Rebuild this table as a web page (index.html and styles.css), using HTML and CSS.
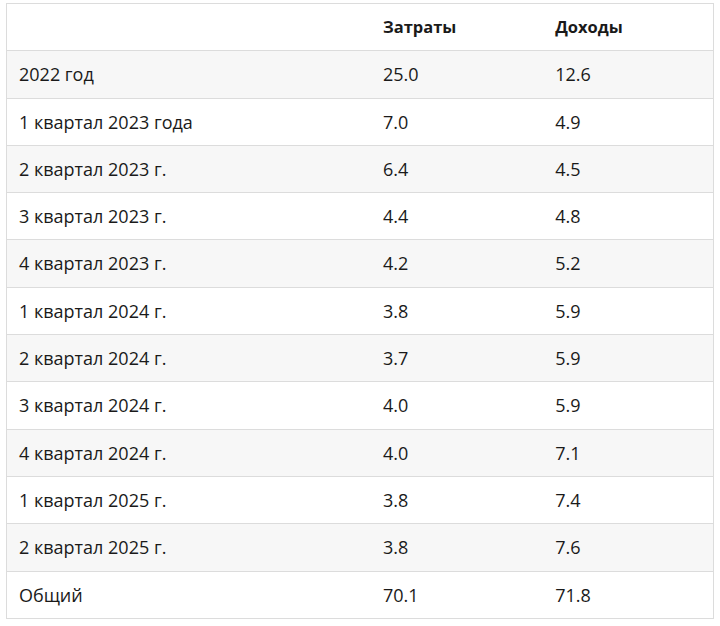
FILE: index.html
```html
<!DOCTYPE html>
<html lang="ru">
<head>
<meta charset="utf-8">
<title>Затраты и доходы</title>
<link rel="stylesheet" href="styles.css">
</head>
<body>
<table class="data">
  <colgroup>
    <col class="c1"><col class="c2"><col class="c3">
  </colgroup>
  <thead>
    <tr><th></th><th>Затраты</th><th>Доходы</th></tr>
  </thead>
  <tbody>
    <tr><td>2022 год</td><td>25.0</td><td>12.6</td></tr>
    <tr><td>1 квартал 2023 года</td><td>7.0</td><td>4.9</td></tr>
    <tr><td>2 квартал 2023 г.</td><td>6.4</td><td>4.5</td></tr>
    <tr><td>3 квартал 2023 г.</td><td>4.4</td><td>4.8</td></tr>
    <tr><td>4 квартал 2023 г.</td><td>4.2</td><td>5.2</td></tr>
    <tr><td>1 квартал 2024 г.</td><td>3.8</td><td>5.9</td></tr>
    <tr><td>2 квартал 2024 г.</td><td>3.7</td><td>5.9</td></tr>
    <tr><td>3 квартал 2024 г.</td><td>4.0</td><td>5.9</td></tr>
    <tr><td>4 квартал 2024 г.</td><td>4.0</td><td>7.1</td></tr>
    <tr><td>1 квартал 2025 г.</td><td>3.8</td><td>7.4</td></tr>
    <tr><td>2 квартал 2025 г.</td><td>3.8</td><td>7.6</td></tr>
    <tr><td>Общий</td><td>70.1</td><td>71.8</td></tr>
  </tbody>
</table>
</body>
</html>
```
FILE: styles.css
```css
html, body {
  background: #ffffff;
}
body {
  margin: 3px 6px;
  font-family: "Open Sans", "Noto Sans", sans-serif;
  font-size: 18px;
  color: #1a1a1a;
}
.data {
  border-collapse: collapse;
  width: 708px;
  table-layout: fixed;
  border: 1px solid #dcdcdc;
}
.c1 { width: 364px; }
.c2 { width: 172px; }
.c3 { width: 170px; }
.data th,
.data td {
  text-align: left;
  padding: 12px 12px;
  line-height: 22.3px;
  border-top: 1px solid #dcdcdc;
  vertical-align: middle;
}
.data th {
  font-size: 16.5px;
  font-weight: 700;
  border-top: none;
}
.data tbody tr:nth-child(odd) {
  background: #f7f7f7;
}
```
